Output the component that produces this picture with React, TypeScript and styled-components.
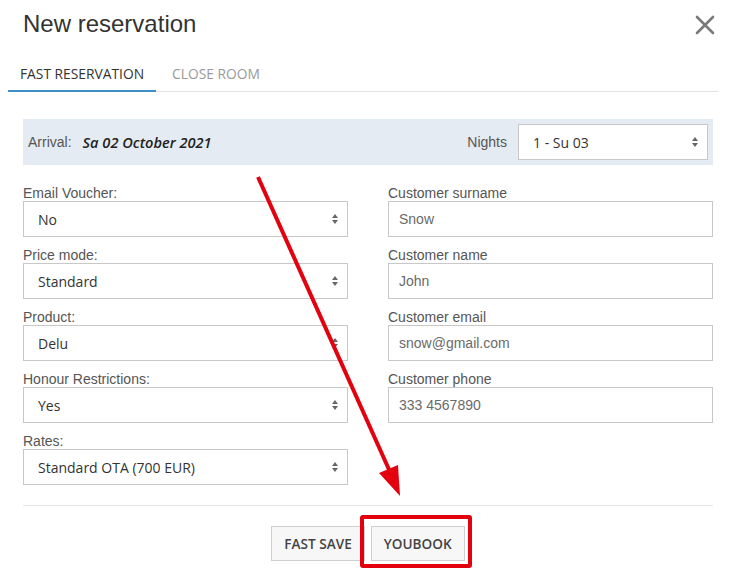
import React from "react";
import styled, { createGlobalStyle } from "styled-components";

const Global = createGlobalStyle`
  html, body { margin: 0; padding: 0; background: #fff; }
  body { font-family: "Liberation Sans", Arial, sans-serif; }
  * { box-sizing: border-box; }
`;

const Page = styled.div`
  position: relative;
  width: 736px;
  height: 583px;
  overflow: hidden;
  background: #fff;
`;

const Header = styled.div`
  display: flex;
  justify-content: space-between;
  align-items: flex-start;
  padding: 10px 21px 0 23px;
  height: 57px;
`;

const Title = styled.h1`
  margin: 0;
  font-family: "Liberation Sans", Arial, sans-serif;
  font-weight: normal;
  font-size: 24px;
  line-height: 28px;
  color: #333;
`;

const CloseBtn = styled.button`
  border: 0;
  background: none;
  padding: 0;
  margin-top: 5px;
  width: 20px;
  height: 20px;
  cursor: pointer;
  display: flex;
`;

const TabBar = styled.div`
  display: flex;
  margin: 0 18px 0 8px;
  border-bottom: 1px solid #e2e2e2;
  height: 35px;
`;

const Tab = styled.div<{ $active?: boolean }>`
  font-family: "Open Sans", sans-serif;
  font-size: 13.8px;
  line-height: 20px;
  padding: 7px 12px 0;
  margin-right: 4px;
  color: ${(p) => (p.$active ? "#333" : "#9a9a9a")};
  border-bottom: 2px solid ${(p) => (p.$active ? "#3d8fc6" : "transparent")};
  margin-bottom: -1px;
`;

const Content = styled.div`
  padding: 0 23px;
`;

const ArrivalBar = styled.div`
  margin-top: 27px;
  height: 46px;
  background: #e5ebf2;
  display: flex;
  align-items: center;
  padding: 0 5px;
`;

const ArrivalLabel = styled.span`
  font-family: "Liberation Sans", Arial, sans-serif;
  font-size: 14px;
  color: #555;
  margin-right: 11px;
`;

const ArrivalDate = styled.span`
  font-family: "Open Sans", sans-serif;
  font-size: 14.6px;
  font-weight: 600;
  font-style: italic;
  color: #222;
`;

const Spacer = styled.div`
  flex: 1;
`;

const NightsLabel = styled.span`
  font-family: "Liberation Sans", Arial, sans-serif;
  font-size: 14px;
  color: #555;
  margin-right: 11px;
`;

const FormGrid = styled.div`
  display: grid;
  grid-template-columns: 325px 325px;
  column-gap: 40px;
  margin-top: 20px;
`;

const Column = styled.div`
  display: flex;
  flex-direction: column;
  gap: 10px;
`;

const Field = styled.div`
  display: flex;
  flex-direction: column;
`;

const Label = styled.label`
  font-family: "Liberation Sans", Arial, sans-serif;
  font-size: 14px;
  line-height: 16px;
  color: #555;
`;

const SelectWrap = styled.div<{ $width?: number }>`
  position: relative;
  width: ${(p) => (p.$width ? `${p.$width}px` : "100%")};
  height: 36px;
  &::before, &::after {
    content: "";
    position: absolute;
    right: 10px;
    width: 0;
    height: 0;
    border-left: 3.5px solid transparent;
    border-right: 3.5px solid transparent;
    pointer-events: none;
  }
  &::before {
    top: 13px;
    border-bottom: 4px solid #666;
  }
  &::after {
    top: 19px;
    border-top: 4px solid #666;
  }
`;

const Select = styled.select`
  appearance: none;
  -webkit-appearance: none;
  width: 100%;
  height: 36px;
  border: 1px solid #c8c8c8;
  border-radius: 0;
  background: #fff;
  padding: 0 14px;
  font-family: "Open Sans", sans-serif;
  font-size: 14px;
  color: #333;
  outline: none;
`;

const Input = styled.input`
  width: 100%;
  height: 36px;
  border: 1px solid #c8c8c8;
  border-radius: 0;
  padding: 0 10px;
  font-family: "Liberation Sans", Arial, sans-serif;
  font-size: 14px;
  color: #6a6a6a;
  outline: none;
`;

const Divider = styled.hr`
  border: 0;
  border-top: 1px solid #e6e6e6;
  margin: 20px 0 0;
`;

const Footer = styled.div`
  display: flex;
  justify-content: center;
  gap: 6px;
  margin-top: 20px;
`;

const Button = styled.button`
  height: 35px;
  padding: 0 12px;
  border: 1px solid #cfcfcf;
  border-radius: 0;
  background: #f7f7f7;
  font-family: "Open Sans", sans-serif;
  font-weight: 600;
  font-size: 13.6px;
  color: #444;
  margin: 0;
`;

const Highlight = styled.div`
  position: relative;
  display: flex;
  &::after {
    content: "";
    position: absolute;
    left: -11px;
    right: -7px;
    top: -11px;
    bottom: -7px;
    border: 4px solid #e3000f;
    border-radius: 3px;
    pointer-events: none;
  }
`;

const ArrowOverlay = styled.svg`
  position: absolute;
  left: 0;
  top: 0;
  pointer-events: none;
`;

type SelectProps = { value: string; width?: number };

const SelectField: React.FC<SelectProps> = ({ value, width }) => (
  <SelectWrap $width={width}>
    <Select defaultValue={value}>
      <option>{value}</option>
    </Select>
  </SelectWrap>
);

const leftFields = [
  { label: "Email Voucher:", value: "No" },
  { label: "Price mode:", value: "Standard" },
  { label: "Product:", value: "Delu" },
  { label: "Honour Restrictions:", value: "Yes" },
  { label: "Rates:", value: "Standard OTA (700 EUR)" },
];

const rightFields = [
  { label: "Customer surname", value: "Snow" },
  { label: "Customer name", value: "John" },
  { label: "Customer email", value: "snow@gmail.com" },
  { label: "Customer phone", value: "333 4567890" },
];

export default function App() {
  return (
    <>
      <Global />
      <Page>
        <Header>
          <Title>New reservation</Title>
          <CloseBtn aria-label="close">
            <svg width="20" height="20" viewBox="0 0 20 20">
              <path d="M2 2 L18 18 M18 2 L2 18" stroke="#7a7a7a" strokeWidth="2.6" strokeLinecap="round" />
            </svg>
          </CloseBtn>
        </Header>
        <TabBar>
          <Tab $active>FAST RESERVATION</Tab>
          <Tab>CLOSE ROOM</Tab>
        </TabBar>
        <Content>
          <ArrivalBar>
            <ArrivalLabel>Arrival:</ArrivalLabel>
            <ArrivalDate>Sa 02 October 2021</ArrivalDate>
            <Spacer />
            <NightsLabel>Nights</NightsLabel>
            <SelectField value="1 - Su 03" width={190} />
          </ArrivalBar>
          <FormGrid>
            <Column>
              {leftFields.map((f) => (
                <Field key={f.label}>
                  <Label>{f.label}</Label>
                  <SelectField value={f.value} />
                </Field>
              ))}
            </Column>
            <Column>
              {rightFields.map((f) => (
                <Field key={f.label}>
                  <Label>{f.label}</Label>
                  <Input defaultValue={f.value} />
                </Field>
              ))}
            </Column>
          </FormGrid>
          <Divider />
          <Footer>
            <Button>FAST SAVE</Button>
            <Highlight>
              <Button>YOUBOOK</Button>
            </Highlight>
          </Footer>
        </Content>
        <ArrowOverlay width="736" height="583" viewBox="0 0 736 583">
          <line x1="258" y1="177" x2="391" y2="474" stroke="#e3000f" strokeWidth="4" />
          <polygon points="400,496 379,473 398,465" fill="#e3000f" />
        </ArrowOverlay>
      </Page>
    </>
  );
}
